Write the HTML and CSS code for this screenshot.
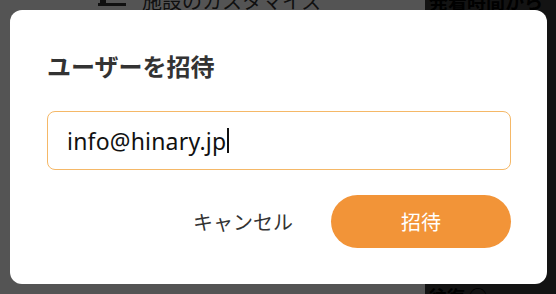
FILE: index.html
```html
<!DOCTYPE html>
<html lang="ja">
<head>
    <meta charset="UTF-8">
    <meta name="viewport" content="width=device-width, initial-scale=1.0">
    <title>ユーザーを招待</title>

    <link rel="stylesheet" href="styles.css">
</head>
<body>

    <div class="page">
        <div class="page_main">
            <div class="page_head">
                <svg class="page_icon" width="28" height="20" viewBox="0 0 28 20">
                    <rect x="2" y="0" width="6" height="14" fill="#333"/>
                    <rect x="0" y="12" width="28" height="3" fill="#333"/>
                </svg>
                <p class="page_title">施設のカスタマイズ</p>
            </div>
        </div>
        <div class="page_side">
            <p class="side_top">発着時間から</p>
            <p class="side_bottom">往復 ◯</p>
        </div>
    </div>

    <div class="overlay"></div>

    <div class="modal">
        <h2 class="modal_title">ユーザーを招待</h2>
        <div class="modal_input">
            <span class="modal_value">info@hinary.jp</span><span class="caret"></span>
        </div>
        <div class="modal_actions">
            <button class="btn btn_cancel">キャンセル</button>
            <button class="btn btn_invite">招待</button>
        </div>
    </div>

</body>
</html>
```

FILE: styles.css
```css
*,*::after,*::before{
    box-sizing: border-box;
    margin: 0;
    padding: 0;
}

body{
    width: 556px;
    height: 294px;
    overflow: hidden;
    font-family: "Noto Sans", "Noto Sans CJK JP", sans-serif;
    background-color: #fff;
}

.page{
    display: flex;
    height: 294px;
    overflow: hidden;
}

.page_main{
    flex: 1;
    background-color: #fff;
}

.page_head{
    display: flex;
    align-items: flex-start;
    gap: 16px;
    padding-left: 98px;
    margin-top: -11px;
}

.page_icon{
    margin-top: 2px;
}

.page_title{
    font-family: "Noto Sans CJK JP", sans-serif;
    font-size: 20px;
    line-height: 24px;
    color: #333;
}

.page_side{
    width: 131px;
    background-color: #3a3a3a;
    display: flex;
    flex-direction: column;
    justify-content: space-between;
    padding-left: 4px;
}

.side_top{
    font-family: "Noto Sans CJK JP", sans-serif;
    font-weight: 700;
    font-size: 19px;
    line-height: 20px;
    margin-top: -9px;
    color: #000;
}

.side_bottom{
    font-family: "Noto Sans CJK JP", sans-serif;
    font-weight: 700;
    font-size: 18px;
    line-height: 20px;
    margin-bottom: -12px;
    color: #000;
}

.overlay{
    position: fixed;
    inset: 0;
    background-color: rgba(0, 0, 0, 0.67);
}

.modal{
    position: absolute;
    top: 10px;
    left: 10px;
    width: 537px;
    height: 274px;
    background-color: #fff;
    border-radius: 12px;
    padding: 38px 36px 36px 37px;
}

.modal_title{
    font-family: "Noto Sans CJK JP", sans-serif;
    font-size: 24px;
    line-height: 36px;
    font-weight: 700;
    color: #333;
}

.modal_input{
    display: flex;
    align-items: center;
    height: 59px;
    margin-top: 27px;
    padding-left: 19px;
    border: 1.5px solid #f5b867;
    border-radius: 8px;
}

.modal_value{
    font-size: 23px;
    letter-spacing: 0.2px;
    color: #111;
}

.caret{
    display: block;
    width: 1.5px;
    height: 25px;
    margin-left: 1px;
    background-color: #111;
}

.modal_actions{
    display: flex;
    justify-content: flex-end;
    gap: 18px;
    margin-top: 25px;
}

.btn{
    border: none;
    background: none;
    height: 53px;
    font-family: "Noto Sans CJK JP", sans-serif;
    font-size: 20px;
    cursor: pointer;
}

.btn_cancel{
    width: 140px;
    color: #333;
}

.btn_invite{
    width: 180px;
    border-radius: 27px;
    background-color: #f29438;
    color: #fff;
}
```
